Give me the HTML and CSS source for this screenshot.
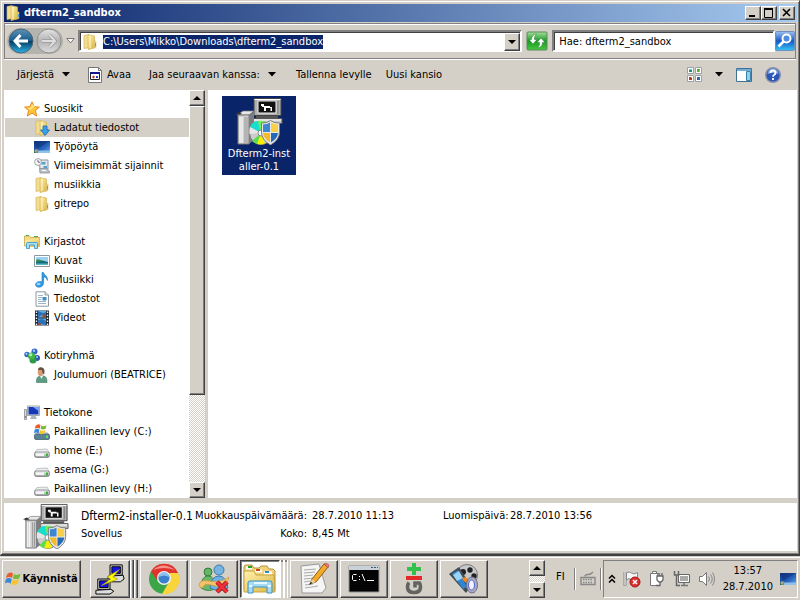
FILE: index.html
```html
<!DOCTYPE html>
<html lang="fi">
<head>
<meta charset="utf-8">
<title>dfterm2_sandbox</title>
<link rel="stylesheet" href="styles.css">
</head>
<body>
<svg class="defs" aria-hidden="true">
  <defs>
    <linearGradient id="gold" x1="0" y1="0" x2="1" y2="1"><stop offset="0" stop-color="#fff3b0"/><stop offset="1" stop-color="#dcb43e"/></linearGradient>
    <linearGradient id="blueBall" x1="0" y1="0" x2="0" y2="1"><stop offset="0" stop-color="#5d93b5"/><stop offset=".48" stop-color="#1a5c8e"/><stop offset=".5" stop-color="#05395f"/><stop offset="1" stop-color="#2bb4e8"/></linearGradient>
    <linearGradient id="greyBall" x1="0" y1="0" x2="0" y2="1"><stop offset="0" stop-color="#e2e2e2"/><stop offset=".5" stop-color="#b4b4b4"/><stop offset="1" stop-color="#dcdcdc"/></linearGradient>
    <linearGradient id="steel" x1="0" y1="0" x2="0" y2="1"><stop offset="0" stop-color="#f4f4f4"/><stop offset="1" stop-color="#9a9a9a"/></linearGradient>
    <linearGradient id="screenBlue" x1="0" y1="0" x2="1" y2="1"><stop offset="0" stop-color="#123a86"/><stop offset=".6" stop-color="#2763bd"/><stop offset="1" stop-color="#6aaae8"/></linearGradient>
    <symbol id="i-folder" viewBox="0 0 16 16">
      <path d="M2 1.500 7 .5v13l-5 1z" fill="#f2dd92" stroke="#d4b45a" stroke-width=".7"/>
      <path d="M6 1.500 8 1l4.500 1v12L6 15.500z" fill="url(#gold)" stroke="#d4b45a" stroke-width=".7"/>
      <path d="M8 1.500v12.500" stroke="#fff6cc"/><path d="M12.500 7h1.500v6.500l-1.500.5z" fill="#f2dc8a" stroke="#d4b45a" stroke-width=".5"/><path d="M13.500 9v3.500" stroke="#49a5e0"/>
    </symbol>
    <symbol id="i-download" viewBox="0 0 16 16">
      <use href="#i-folder"/>
      <path d="M9 6h4v4h2.500L11 15.500 6.500 10H9z" fill="#3d9ee6" stroke="#1b6db5" stroke-width=".8"/>
    </symbol>
    <symbol id="i-star" viewBox="0 0 16 16">
      <path d="m8 .8 2.100 4.900 5.300.4-4 3.500 1.300 5.400L8 12.100 3.300 15l1.300-5.400-4-3.500 5.300-.4z" fill="#ffc53a" stroke="#e58a1e" stroke-linejoin="round"/>
      <path d="M8 3 6.700 6.600 3 7l3 2 5-3.500z" fill="#fff0a0" opacity=".7"/>
    </symbol>
    <symbol id="i-desktop" viewBox="0 0 16 16">
      <path d="M0 2h16v11.500H0z" fill="url(#screenBlue)"/><path d="M0 2h16L3 10z" fill="#0a2a6e" opacity=".5"/>
      <path d="M0 11.500h16V14H0z" fill="#8fc1ea"/><path d="M0 11.500h4V14H0z" fill="#2b6d43"/><circle cx="2.500" cy="12" r="1.800" fill="#f2a23a"/><path d="M2.500 10.200a1.800 1.800 0 0 1 0 3.600z" fill="#4a9be8"/>
    </symbol>
    <symbol id="i-recent" viewBox="0 0 16 16">
      <path d="M5 2h9v9H6z" fill="#e3e8ec" stroke="#8c969e"/><path d="M7.500 4h4v2.500h-4zm2 4h3.500v2H9.500z" fill="#5b9ec9"/>
      <path d="M5.500 10.500H13l2.500 3v1.500H6z" fill="#b9c0c6" stroke="#87919a" stroke-width=".8"/><path d="M8 12.500h4" stroke="#fff"/>
      <circle cx="4" cy="4" r="3.400" fill="#fafafa" stroke="#9aa2a8"/><path d="M4 2v2.200h2" fill="none" stroke="#667"/>
    </symbol>
    <symbol id="i-library" viewBox="0 0 16 16">
      <path d="M.5 3V2h5l1 1.500h9V12H.5z" fill="#f5dc85" stroke="#c9a441" stroke-width=".8"/><path d="M2 1.500h3M10 2.500h4" stroke="#4ab04a"/><path d="M1 6h14.500v7H1z" fill="url(#gold)"/>
      <path d="M2.500 14.500v-5q0-1 1-1h9q1 0 1 1v5h-3V11h-5v3.500z" fill="#a9def7" stroke="#3b9bcf" stroke-width=".9"/>
    </symbol>
    <symbol id="i-picture" viewBox="0 0 16 16">
      <path d="M.5 2.500h15v11H.5z" fill="#fff" stroke="#8f979c"/><path d="M2 4h12v8H2z" fill="#9bd2f2"/><path d="M2 8q4-2 12 1v3H2z" fill="#196b77"/><path d="M2 7q3-2 6 1L2 9z" fill="#3a9050"/><path d="M2 10.500h12V12H2z" fill="#59b8cc"/>
    </symbol>
    <symbol id="i-music" viewBox="0 0 16 16">
      <path d="M8 .5h1.500c.5 2.500 4.500 3.500 4 8-1-3-2.500-3.200-4-3.500v6.500c0 2-2 3.700-4.500 3.700-2 0-3.500-1-3.500-2.500C1.500 10.800 4 9 8 9.800z" fill="#319be3" stroke="#1a75bf" stroke-width=".6"/><ellipse cx="4.500" cy="12" rx="2" ry="1.300" fill="#94d3fa"/>
    </symbol>
    <symbol id="i-doc" viewBox="0 0 16 16">
      <path d="M2 .8h9L14.500 4v11.200H2z" fill="#fff" stroke="#8f979c"/><path d="M11 .8V4h3.500" fill="#dfe5e9" stroke="#8f979c"/><path d="M4 4.500h5M4 6.500h4M4 8.500h3M4 10.500h8M4 12.500h8" stroke="#9eb4c8"/><path d="M8.500 6h4v3.500h-4z" fill="#3a8fc6"/>
    </symbol>
    <symbol id="i-video" viewBox="0 0 16 16">
      <path d="M1 .5h14v15H1z" fill="#20262c"/><path d="M4 1h8v6.500H4zm0 7.500h8V15H4z" fill="#5ab0ea"/><path d="m4 1 5 2 3-1v4L8 5 4 7.500zm0 9 4-1 4 2v4l-5-1-3 1z" fill="#2d6fb4"/><path d="m9 4 3 1.500v2H8zM4 13l3 1v1H4z" fill="#a14a34"/>
      <path d="M2.500 1.500v14M13.500 1.500v14" stroke="#e8eef2" stroke-width="1.400" stroke-dasharray="1.500 1.500"/>
    </symbol>
    <symbol id="i-group" viewBox="0 0 16 16">
      <circle cx="10.500" cy="3.500" r="3" fill="#2f64c8"/><circle cx="13" cy="10" r="3" fill="#2e57b8"/><circle cx="3" cy="6.500" r="2.700" fill="#2e6bd0"/><circle cx="9" cy="12" r="3.500" fill="#2c9b46"/><circle cx="7.500" cy="8" r="3.600" fill="#43b649"/>
      <circle cx="6.700" cy="6.800" r="1.600" fill="#b6f0a4"/><circle cx="10" cy="2.700" r="1.200" fill="#a8c8ff"/><circle cx="2.500" cy="5.700" r="1" fill="#b5d5ff"/><circle cx="13" cy="9" r="1" fill="#a8c8ff"/>
    </symbol>
    <symbol id="i-person" viewBox="0 0 16 16">
      <path d="M2.500 15.500c0-4 .5-6 4-6.500h3c3 .5 3.500 3 3.500 6.500z" fill="#5f9d83" stroke="#3d7660" stroke-width=".6"/><path d="m6 9 1.500 3L9 9z" fill="#eef3f0"/><ellipse cx="6.500" cy="5" rx="2.800" ry="4" fill="#d79b75"/><path d="M4 3C4 0 7 0 8.500.8c2.500 1 2.300 4.200 1.500 7L8.500 6 8 3z" fill="#6b5040"/>
    </symbol>
    <symbol id="i-computer" viewBox="0 0 16 16">
      <path d="M.5 4.500h2v10h-2z" fill="#d8dcdf" stroke="#858c92" stroke-width=".8"/><path d="M1 11h1v2H1z" fill="#3bb54a"/><path d="M3.500 1h12v9.500h-12z" fill="#e5e8ea" stroke="#8d959b" stroke-width=".8"/><path d="M4.500 2h10v7.500h-10z" fill="#1737b4"/><path d="M9 2h5.500v4z" fill="#7aa3ff"/><path d="M7.500 11h4l1.500 3H6z" fill="#aeb5ba"/>
    </symbol>
    <symbol id="i-drive" viewBox="0 0 16 16">
      <path d="m3 6.500 10-.5 2.500 4H.5z" fill="#eceeef" stroke="#a9adb0" stroke-width=".7"/><rect x=".5" y="9" width="15" height="5.500" rx="2" fill="url(#steel)" stroke="#7b8084" stroke-width=".8"/><path d="M2 10.500h8v2.500H2z" fill="#f4f5f5"/><path d="M12 10.500h2v3h-2z" fill="#33b53c"/>
    </symbol>
    <symbol id="i-flag" viewBox="0 0 16 16">
      <path d="M2 3.500Q5 0 8 2.500L7 7Q4 5 1 7.200z" fill="#ea5b2d"/><path d="M9 3Q12 5 15.500 2.800L14.300 7.200Q11 9 8 7.200z" fill="#7ab83a"/><path d="M.8 8.300Q4 6 6.800 8.200L5.600 12.800Q3 10.500 0 12.600z" fill="#3a86d8"/><path d="M7.700 8.500Q10.800 10.500 14 8.300L12.800 12.700Q9.500 15 6.500 13z" fill="#f8c42e"/>
    </symbol>
    <symbol id="i-sysdrive" viewBox="0 0 16 16">
      <path d="m3 8 10-.5 2.500 3H.5z" fill="#c6d2da"/><rect x=".5" y="10" width="15" height="5.500" rx="1.500" fill="#5b8195" stroke="#42616f" stroke-width=".8"/><path d="M12 11.500h2v2.500h-2z" fill="#5ce05e"/><svg x="0" y="-1" width="13" height="13"><use href="#i-flag"/></svg>
    </symbol>
    <symbol id="i-installer" viewBox="0 0 48 48">
      <path d="M19 1.500h27v17H19z" fill="#b0b0b0" stroke="#444"/><path d="M19.500 2.500h26" stroke="#fff"/><path d="M23 4h18v12H23z" fill="#111" stroke="#eee"/><path d="M26 7h3v2h6v1h2v4h-1.500v-3H31v3h-2v-4h-2V9h-1z" fill="#fff"/><path d="M43 4v13" stroke="#777"/>
      <path d="M21 19h22v2H21z" fill="#555"/><path d="M18 21.500h29v5H18z" fill="#c8c8c8" stroke="#555"/><path d="M19 23h27" stroke="#fff"/>
      <path d="m2 18 6-4h11l-5 4z" fill="#e8e8e8" stroke="#777" stroke-width=".7"/><path d="m0 17 4-2 3 2-3 1z" fill="#333"/><path d="M3 18h11v29H3z" fill="#d0d0d0" stroke="#777"/><path d="M5 20v26M7 20v26" stroke="#fff"/><path d="M10 20v26M12 20v26" stroke="#999"/><path d="m14 18 5-4v29l-5 4z" fill="#7d7d7d"/>
      <circle cx="26" cy="36" r="11.500" fill="#ccc" stroke="#777"/><path d="M26 36 15 30q3-6 8-6z" fill="#16dfd0"/><path d="m26 36-3-12q4-1 8 1z" fill="#6df05a"/><path d="m26 36-4 11q4 1 8-.5z" fill="#f6f000"/><path d="m26 36-9 8q2 2 5 3z" fill="#5edb4b"/><path d="m26 36-11-6q-1 3-.5 7z" fill="#e6e6e6"/><circle cx="26" cy="36" r="3" fill="#fff" stroke="#888"/>
      <path d="M35.500 23.500q4 3 9 2.500v9q0 8-9 13-9-5-9-13v-9q5 .5 9-2.500z" fill="#e9e9e9" stroke="#7a7a7a"/><path d="M35 25.500V35h-7v-7.500q4 0 7-2z" fill="#3d86d2"/><path d="M36 25.500V35h7v-7.500q-4 0-7-2z" fill="#f8cf45"/><path d="M35 36v9.500q-6.500-4-7-9.500z" fill="#f3bb2c"/><path d="M36 36v9.500q6.500-4 7-9.500z" fill="#2468b8"/>
    </symbol>
  </defs>
</svg>

<main class="window">
  <header class="titlebar">
    <svg class="icon"><use href="#i-folder"/></svg>
    <h1>dfterm2_sandbox</h1>
    <div class="captions">
      <button class="raised caption" aria-label="Pienennä"><svg width="12" height="10"><path d="M2 7h6v2H2z"/></svg></button>
      <button class="raised caption" aria-label="Suurenna"><svg width="12" height="10"><path d="M1.500 1v8.500h8V1M1 1h9" fill="none" stroke="#000"/><path d="M1 0h9v2H1z"/></svg></button>
      <button class="raised caption close" aria-label="Sulje"><svg width="12" height="10"><path d="m2 1 7 7M9 1 2 8" stroke="#000" stroke-width="1.600"/></svg></button>
    </div>
  </header>

  <nav class="navbar">
    <div class="travel">
      <button class="plain" aria-label="Takaisin"><svg width="26" height="26"><circle cx="13" cy="13" r="12" fill="url(#blueBall)" stroke="#4d6474"/><path d="M12.500 7 7 13l5.500 6M7.500 13H20" fill="none" stroke="#fff" stroke-width="3"/></svg></button>
      <button class="plain" aria-label="Eteenpäin"><svg width="26" height="26"><circle cx="13" cy="13" r="12" fill="url(#greyBall)" stroke="#8f8f8f"/><path d="m13.500 7 5.500 6-5.500 6M18.500 13H6" fill="none" stroke="#999" stroke-width="3.400"/><path d="m13.500 7 5.500 6-5.500 6M18.500 13H6" fill="none" stroke="#dedede" stroke-width="2"/></svg></button>
    </div>
    <button class="plain recent" aria-label="Viimeisimmät sivut"><svg width="9" height="6"><path d="M.8.5h7.400L4.500 5z" fill="#fff" stroke="#777"/></svg></button>
    <div class="sunken address">
      <svg class="icon"><use href="#i-folder"/></svg>
      <input class="path" aria-label="Osoite" value="C:\Users\Mikko\Downloads\dfterm2_sandbox">
      <button class="raised drop" aria-label="Aiemmat sijainnit"><svg width="8" height="4"><path d="M0 0h8L4 4z"/></svg></button>
    </div>
    <button class="plain refresh" aria-label="Päivitä"><svg width="22" height="20"><defs><linearGradient id="rg" x1="0" y1="0" x2="0" y2="1"><stop offset="0" stop-color="#a6dc9c"/><stop offset=".5" stop-color="#189a24"/><stop offset="1" stop-color="#49c741"/></linearGradient></defs><rect x="1" y="1" width="20" height="18" rx="1" fill="url(#rg)" stroke="#57895a"/><path d="m7 13-4-4.500h2.500q0-4.500 5-5.500L8.500 6v2.500H11zM15 7l4 4.500h-2.500q0 4.500-5 5.500l2-3v-2.500H11z" fill="#fff" stroke="#237e2b" stroke-width=".5"/></svg></button>
    <input class="sunken search" type="text" aria-label="Haku" value="Hae: dfterm2_sandbox">
    <button class="plain find" aria-label="Hae"><svg width="20" height="20"><defs><linearGradient id="sg" x1="0" y1="0" x2="0" y2="1"><stop offset="0" stop-color="#9ec1ee"/><stop offset=".5" stop-color="#1659c7"/><stop offset="1" stop-color="#35c5f2"/></linearGradient></defs><rect x=".5" y=".5" width="19" height="19" rx="1" fill="url(#sg)" stroke="#6e8fc0"/><circle cx="11.500" cy="7.500" r="4" fill="#4f8be0" stroke="#fff" stroke-width="2"/><path d="m8.500 10.500-5 5" stroke="#fff" stroke-width="2.600"/></svg></button>
  </nav>

  <div class="toolbar" role="toolbar">
    <button class="plain organize">Järjestä <svg width="8" height="5"><path d="M0 0h8L4 4.500z"/></svg></button>
    <button class="plain open"><svg width="14" height="16"><path d="M.5.500h10l3 3v12H.5z" fill="#fff" stroke="#777"/><path d="M10.500.5v3h3" fill="none" stroke="#777"/><path d="M2.500 5.500h9v7h-9z" fill="#fff" stroke="#222"/><path d="M2 5h10v2H2z" fill="#16168c"/><path d="m4 10 1.500-1.500L7 10l-1.500 1.500z" fill="#c22"/><path d="M8 9h2v2H8z" fill="#24c"/></svg>Avaa</button>
    <button class="plain share">Jaa seuraavan kanssa: <svg width="8" height="5"><path d="M0 0h8L4 4.500z"/></svg></button>
    <button class="plain burn">Tallenna levylle</button>
    <button class="plain">Uusi kansio</button>
    <div class="tools">
      <button class="plain" aria-label="Vaihda näkymää"><svg width="15" height="15"><g fill="#fff" stroke="#9aa3a8"><path d="M.5.5h6v6h-6zM8.500.5h6v6h-6zM.5 8.500h6v6h-6zM8.500 8.500h6v6h-6z"/></g><path d="M2 3h3v2H2z" fill="#29916a"/><path d="M10 2h3v3h-3z" fill="#61a832"/><path d="M2 10h3v3H2z" fill="#b63a20"/><path d="M10 10h3v3h-3z" fill="#31619c"/><path d="M2 2h3v1H2z" fill="#72c3ec"/><path d="M12 3h1v2h-1zM4 10h1v1H4z" fill="#eea72e"/><path d="M12 10h1v2h-1z" fill="#b5452c"/></svg></button>
      <button class="plain" aria-label="Lisää näkymiä"><svg width="8" height="5"><path d="M0 0h8L4 4.500z"/></svg></button>
      <button class="plain" aria-label="Esikatseluruutu"><svg width="16" height="14"><path d="M.5.5h15v13H.5z" fill="#fff" stroke="#3e7195"/><path d="M1 1h14v2H1z" fill="#74aed0"/><path d="M10.500 3.500h4v9h-4z" fill="#8fd0ea" stroke="#3d82ab"/></svg></button>
      <button class="plain" aria-label="Ohje"><svg width="16" height="16"><circle cx="8" cy="8" r="7.300" fill="#2c57b8" stroke="#8a92a5" stroke-width="1.400"/><path d="M2.500 7a5.500 5.500 0 0 1 11 0q-5-2-11 0z" fill="#7da5e6"/><path d="M5.500 6q0-2.500 2.500-2.500T10.500 6q0 1-1.200 1.800Q8 8.500 8 9.800M8 11v2" fill="none" stroke="#fff" stroke-width="1.800"/></svg></button>
    </div>
  </div>

  <div class="body">
    <aside class="sidebar">
      <div class="tree">
        <ul>
          <li><a href="#"><svg class="icon"><use href="#i-star"/></svg>Suosikit</a>
            <ul>
              <li class="selected"><a href="#"><svg class="icon"><use href="#i-download"/></svg>Ladatut tiedostot</a></li>
              <li><a href="#"><svg class="icon"><use href="#i-desktop"/></svg>Työpöytä</a></li>
              <li><a href="#"><svg class="icon"><use href="#i-recent"/></svg>Viimeisimmät sijainnit</a></li>
              <li><a href="#"><svg class="icon"><use href="#i-folder"/></svg>musiikkia</a></li>
              <li><a href="#"><svg class="icon"><use href="#i-folder"/></svg>gitrepo</a></li>
            </ul></li>
          <li><a href="#"><svg class="icon"><use href="#i-library"/></svg>Kirjastot</a>
            <ul>
              <li><a href="#"><svg class="icon"><use href="#i-picture"/></svg>Kuvat</a></li>
              <li><a href="#"><svg class="icon"><use href="#i-music"/></svg>Musiikki</a></li>
              <li><a href="#"><svg class="icon"><use href="#i-doc"/></svg>Tiedostot</a></li>
              <li><a href="#"><svg class="icon"><use href="#i-video"/></svg>Videot</a></li>
            </ul></li>
          <li><a href="#"><svg class="icon"><use href="#i-group"/></svg>Kotiryhmä</a>
            <ul>
              <li><a href="#"><svg class="icon"><use href="#i-person"/></svg>Joulumuori (BEATRICE)</a></li>
            </ul></li>
          <li><a href="#"><svg class="icon"><use href="#i-computer"/></svg>Tietokone</a>
            <ul>
              <li><a href="#"><svg class="icon"><use href="#i-sysdrive"/></svg>Paikallinen levy (C:)</a></li>
              <li><a href="#"><svg class="icon"><use href="#i-drive"/></svg>home (E:)</a></li>
              <li><a href="#"><svg class="icon"><use href="#i-drive"/></svg>asema (G:)</a></li>
              <li><a href="#"><svg class="icon"><use href="#i-drive"/></svg>Paikallinen levy (H:)</a></li>
            </ul></li>
        </ul>
      </div>
      <div class="scrollbar dither">
        <button class="raised arrow" aria-label="Vieritä ylös"><svg width="8" height="4"><path d="M0 4h8L4 0z"/></svg></button>
        <div class="raised thumb"></div>
        <div class="track"></div>
        <button class="raised arrow" aria-label="Vieritä alas"><svg width="8" height="4"><path d="M0 0h8L4 4z"/></svg></button>
      </div>
    </aside>
    <section class="files">
      <button class="file"><svg width="48" height="48"><use href="#i-installer"/></svg><span>Dfterm2-inst<br>aller-0.1</span></button>
    </section>
  </div>

  <footer class="details">
    <svg class="preview"><use href="#i-installer"/></svg>
    <div class="facts">
      <strong>Dfterm2-installer-0.1</strong><span class="label">Muokkauspäivämäärä:</span><span>28.7.2010 11:13</span><span>Luomispäivä:</span><span>28.7.2010 13:56</span>
      <span>Sovellus</span><span class="label">Koko:</span><span>8,45 Mt</span>
    </div>
  </footer>
</main>

<footer class="taskbar">
  <button class="raised start"><svg class="icon"><use href="#i-flag"/></svg>Käynnistä</button>
  <div class="tasks">
    <div class="stack">
      <button class="raised task" aria-label="PuTTY"><svg width="32" height="32" viewBox="0 0 34 34"><g stroke="#000"><path d="M17 2h13v11H17z" fill="#ccc"/><path d="M19 4h9v7h-9z" fill="#1414e8"/><path d="m15 14 16-1 1 4-4 3H15z" fill="#ddd"/><path d="M4 17h13v11H4z" fill="#ccc"/><path d="M6 19h9v7H6z" fill="#1414e8"/><path d="m2 29 16-1 3 2-4 3H2z" fill="#ddd"/></g><path d="m27 7-13 8 4 2-10 7 17-7-5-2z" fill="#ff0" stroke="#b49b00" stroke-width=".7"/></svg></button>
      <i></i><i></i>
    </div>
    <button class="raised task" aria-label="Chrome"><svg width="32" height="32" viewBox="0 0 32 32"><circle cx="16" cy="16" r="15" fill="#3aa648"/><path d="M3 8.500A15 15 0 0 1 30 10H16L9 17z" fill="#e1332d"/><path d="M30 10A15 15 0 0 1 14 31l7-12 1-9z" fill="#f9d43a"/><path d="M5 7Q15-2 27 7 16 3 5 7z" fill="#f79386"/><circle cx="16" cy="15" r="7" fill="#f4f4f0"/><circle cx="16" cy="15" r="5.600" fill="#3a80cc"/><path d="M11 14a5 5 0 0 1 10 0q-5-3-10 0z" fill="#8dc0f0"/></svg></button>
    <button class="raised task" aria-label="Messenger"><svg width="32" height="32" viewBox="0 0 32 32"><circle cx="10" cy="9" r="4" fill="#63b565" stroke="#357b3a"/><path d="M3 25q0-12 7-12t8 12q-7 5-15 0z" fill="#69b96a" stroke="#3d8742"/><circle cx="21" cy="7" r="5" fill="#77b4e2" stroke="#397bae"/><path d="M12 25q1-12 9-12 7 0 9 12-8 5-18 0z" fill="#6fb0e0" stroke="#397bae"/><path d="M1 22q1-6 10-4 12 2 20-4-2 12-14 9-12-4-12 2-4 0-4-3z" fill="#f3c26a" stroke="#cf9536" stroke-width=".7"/><path d="m19 19 10 10m0-10L19 29" stroke="#a00f16" stroke-width="4.500"/><path d="m19 19 10 10m0-10L19 29" stroke="#ee3038" stroke-width="3"/></svg></button>
    <div class="stack">
      <button class="task active" aria-label="Resurssienhallinta"><svg width="34" height="32" viewBox="0 0 34 32"><path d="M1 8V4q0-2 2-2h6l2 3h5l2-2h6l2 3h4l2 2v19H1z" fill="#efd27a" stroke="#b8923d"/><path d="M3 5h6M12 8h7M21 10h8" stroke="#fff" stroke-width="3"/><path d="M5 3h4v2H5z" fill="#1ca12b"/><path d="M13 6h4v2h-4z" fill="#d2431d"/><path d="M22 8h4v2h-4z" fill="#288bd4"/><path d="M1 8h10l2 4h18l1 17H1z" fill="url(#gold)" stroke="#c9a441"/><path d="M5 30V20q0-2 2-2h20q2 0 2 2v10h-5v-6H10v6z" fill="#a7dbf5" stroke="#3892c5"/><path d="M6 23h3M25 23h3M11 20h13" stroke="#e7f9ff" stroke-width="2"/></svg></button>
      <i></i><i></i>
    </div>
    <button class="raised task" aria-label="Muistio"><svg width="32" height="32" viewBox="0 0 32 32"><path d="m3 3 18-2 7 24-4 5H4z" fill="#f5f5f5" stroke="#999"/><path d="m6 7 12-1M6 10l11-1M6 13l9-1M6 16l10-1M6 19l6-1M7 22l8-1M7 25l13-2" stroke="#aaa"/><path d="m12 21 2-5L26 1l4 3-12 15z" fill="#f5aa27" stroke="#8b5b16"/><path d="m26 1 2-1 3 2-1 3z" fill="#e87678" stroke="#a34848" stroke-width=".6"/><path d="m12 21 2-5 4 3z" fill="#e6cfa0"/><path d="m11 22 2-3 1 1z"/></svg></button>
    <button class="raised task" aria-label="Komentokehote"><svg width="32" height="28" viewBox="0 0 32 28"><path d="M1 1h30v26H1z" fill="#050505" stroke="#8b8f94"/><path d="M1 1h30v4H1z" fill="#c9d1d9"/><path d="M23 2h2v1h-2zm3 0h2v1h-2zm3 0h1v1h-1z" fill="#456"/><path d="M8.500 9.500h-3l-1 1v4l1 1h3M11.500 11v1m0 2v1M14 9l3 7M19 15.500h7" fill="none" stroke="#fff"/></svg></button>
    <button class="raised task" aria-label="Git"><svg width="18" height="32" viewBox="0 0 18 32"><path d="M7 0h4v4h5v4h-5v4H7V8H2V4h5z" fill="#31c14c"/><path d="M1 13h16v4H1z" fill="#e22a2a"/><path d="M4 19.500Q2.500 21 2.500 24.500 3 29.500 9 29.500t6.500-5q0-3-1-4.500H10v4.500" fill="none" stroke="#63635f" stroke-width="3.600"/></svg></button>
    <button class="raised task" aria-label="Movie Maker"><svg width="32" height="32" viewBox="0 0 32 32"><circle cx="19" cy="12" r="10.500" fill="#c7c9cb" stroke="#77797c"/><g fill="#222"><circle cx="15" cy="9" r="3"/><circle cx="22" cy="7" r="2.700"/><circle cx="26" cy="13" r="2.700"/></g><path d="m1 11 10-7 12 19-5 7z" fill="#434b52"/><path d="m4 11 6-4 9 17-4 2z" fill="#2f86d4"/><path d="m5 12 6-4 4 7-6 3z" fill="#9cd3f5"/><path d="m16 14 5 2-3 4-4-4z" fill="#ef8a22"/><ellipse cx="24" cy="22" rx="5.500" ry="8" fill="#a8abc4" stroke="#6d7089"/><ellipse cx="23.500" cy="22" rx="3" ry="5" fill="#eef2ff" stroke="#5561cc"/></svg></button>
  </div>
  <div class="scroller dither">
    <button class="raised arrow" aria-label="Edelliset"><svg width="8" height="4"><path d="M0 4h8L4 0z"/></svg></button>
    <button class="raised arrow" aria-label="Seuraavat"><svg width="8" height="4"><path d="M0 0h8L4 4z"/></svg></button>
  </div>
  <span class="language">FI</span>
  <div class="keyboard"><svg width="16" height="16"><path d="M1 6.500h14v7H1z" fill="none" stroke="#888" stroke-width="1.400"/><path d="M3 8.500h10M3 11.500h10" stroke="#888" stroke-width="1.400" stroke-dasharray="1.500 1"/><path d="M5 5.500q0-2 3-2t5-2.500" fill="none" stroke="#888" stroke-width="1.400"/></svg></div>
  <div class="tray">
    <svg width="8" height="10"><path d="m1 4.500 3-3 3 3m-6 4 3-3 3 3" fill="none" stroke="#000" stroke-width="1.500"/></svg>
    <svg width="18" height="18"><path d="M2 2v14" stroke="#888" stroke-width="3"/><path d="M2 2v13.500" stroke="#fff"/><path d="M3.500 3q3-2 5 0t6-.5v7q-3 2-6 0t-5 .5z" fill="#f5f5f5" stroke="#888"/><circle cx="12" cy="12" r="5" fill="#db2e2e" stroke="#a51919"/><path d="m10 10 4 4m0-4-4 4" stroke="#fff" stroke-width="1.600"/></svg>
    <svg width="18" height="18"><path d="M2.500 3.500h9v12h-9zM4.500 1.500h4v2h-4z" fill="#fff" stroke="#777"/><path d="M9 6h6v4l-2 2h-2L9 10zM10 3v3m4-3v3M12 12v3.500H8" fill="#fff" stroke="#666" stroke-width="1.300"/></svg>
    <svg width="18" height="18"><path d="M5.500 4.500h11v8h-11z" fill="#aaa" stroke="#666"/><path d="M6.500 5.500h9v6h-9z" fill="none" stroke="#fff"/><path d="M8 15.500h7M11 13v2" stroke="#777" stroke-width="1.500"/><path d="M1.500 1v4h4V1M3.500 5v10.500H7" fill="none" stroke="#666" stroke-width="1.500"/></svg>
    <svg width="18" height="18"><path d="M1.500 6.500h3l4-4v13l-4-4h-3z" fill="#fff" stroke="#777"/><path d="M10.500 6.500q2 2.500 0 5M12.500 4.500q3.500 4.500 0 9M14.500 2.500q4 6.500 0 13" fill="none" stroke="#888"/></svg>
    <time class="clock"><span>13:57</span><span>28.7.2010</span></time>
    <svg class="icon"><use href="#i-desktop"/></svg>
  </div>
</footer>
</body>
</html>
```
FILE: styles.css
```css
* { box-sizing: border-box; }

body {
  margin: 0;
  min-height: 100vh;
  display: flex;
  flex-direction: column;
  background: #d4d0c8;
  color: #000;
  font: 11px/14px "DejaVu Sans Condensed", "Noto Sans", sans-serif;
}

button, input { font: inherit; color: inherit; }
button { padding: 0; display: flex; align-items: center; justify-content: center; white-space: nowrap; }
svg { display: block; flex: none; }
ul { list-style: none; margin: 0; padding: 0; }
.defs { position: absolute; width: 0; height: 0; }
.icon { width: 16px; height: 16px; }
.plain { background: none; border: 0; }

.raised {
  background: #d4d0c8;
  border: 1px solid;
  border-color: #fff #404040 #404040 #fff;
  box-shadow: inset -1px -1px #808080;
}
.sunken {
  background: #fff;
  border: 2px solid;
  border-color: #808080 #fff #fff #808080;
  box-shadow: inset 1px 1px #404040;
}
.dither { background: repeating-conic-gradient(#fff 0 25%, #d4d0c8 0 50%) 0 0 / 2px 2px; }

/* Window frame */
.window {
  flex: 1;
  min-height: 0;
  display: flex;
  flex-direction: column;
  padding: 2px 2px 3px;
  border: 1px solid #d4d0c8;
  border-right-color: #404040;
  border-bottom: 2px solid #404040;
  box-shadow: inset 1px 1px #fff, inset -1px -1px #808080;
}
.titlebar {
  display: flex;
  align-items: center;
  gap: 3px;
  height: 18px;
  margin: 1px 0 1px 1px;
  padding: 0 2px 0 1px;
  background: linear-gradient(90deg, #0a246a, #a6caf0);
  color: #fff;
}
.titlebar h1 { flex: 1; margin: 0; font-size: 11px; font-weight: bold; }
.captions { display: flex; }
.caption { width: 16px; height: 14px; }
.close { margin-left: 2px; }

/* Address and search */
.navbar {
  display: flex;
  align-items: center;
  height: 36px;
  margin: 0 1px;
  padding-left: 2px;
  border: 1px solid #808080;
  box-shadow: 0 1px #fff, inset 0 1px #fff;
}
.travel { display: flex; gap: 2px; padding: 0 1px; border-radius: 13px; background: #b5b3ae; }
.recent { width: 15px; height: 20px; }
.address { flex: 21 1 0; display: flex; align-items: center; height: 22px; padding: 1px 0 0 2px; }
.path {
  field-sizing: content;
  height: 14px;
  margin: 0 auto 0 5px;
  padding: 0;
  border: 0;
  background: #0a246a;
  color: #fff;
}
.drop { width: 16px; height: 18px; }
.refresh { margin: 0 4px; }
.search { flex: 10 1 0; min-width: 0; height: 22px; padding: 0 5px; }

/* Command bar */
.toolbar { display: flex; align-items: center; height: 31px; padding: 0 16px 0 14px; }
.organize { gap: 8px; margin-right: 18px; }
.open { gap: 5px; margin-right: 18px; }
.share { gap: 8px; margin-right: 20px; }
.burn { margin-right: 14px; }
.tools { display: flex; align-items: center; gap: 13px; margin-left: auto; }

/* Folder tree and file area */
.body { flex: 1; min-height: 0; display: flex; margin-left: 1px; }
.sidebar { display: flex; width: 201px; }
.tree { flex: 1; padding: 9px 0 0 1px; background: #fff; overflow: hidden; }
.tree a { display: flex; align-items: center; gap: 4px; height: 19px; padding: 1px 0 0 19px; color: inherit; text-decoration: none; white-space: nowrap; }
.tree ul ul { margin-bottom: 19px; }
.tree li:last-child ul { margin-bottom: 0; }
.tree li li a { padding-left: 29px; }
.selected { background: #d4d0c8; }
.scrollbar { display: flex; flex-direction: column; width: 16px; }
.arrow { height: 16px; width: 16px; }
.thumb { flex: 289; }
.track { flex: 87; }
.files { flex: 1; margin-left: 3px; padding: 6px 14px; background: #fff; }
.file { flex-direction: column; justify-content: flex-start; gap: 2px; width: 74px; padding: 1px 0 2px; border: 0; background: #0a246a; color: #fff; line-height: 13px; }

/* Details pane */
.details { display: flex; gap: 12px; min-height: 48px; margin: 5px 0 0 1px; padding-left: 19px; background: #fff; overflow: hidden; }
.preview { width: 46px; height: 46px; }
.facts {
  display: grid;
  grid-template-columns: 112px 109px 126px 62px auto;
  grid-auto-rows: 18px;
  column-gap: 5px;
  align-items: center;
  padding-top: 4px;
  white-space: nowrap;
}
.facts strong { font-size: 12px; font-weight: normal; }
.label { justify-self: end; }

/* Taskbar */
.taskbar {
  display: flex;
  align-items: center;
  height: 44px;
  padding: 3px 2px 2px;
  border-top: 1px solid #d4d0c8;
  box-shadow: inset 0 1px #fff;
}
.start { gap: 1px; width: 79px; height: 38px; font-weight: bold; }
.tasks { display: flex; gap: 2px; margin-left: 9px; }
.task { width: 48px; height: 38px; }
.stack { display: flex; width: 48px; }
.stack .task { width: 40px; }
.stack i { width: 4px; border-right: 1px solid #404040; border-left: 1px solid #fff; box-shadow: inset -1px 0 #808080; }
.active { background: #fff; border: 1px solid; border-color: #404040 #fff #fff #404040; box-shadow: inset 1px 1px #808080; }
.active ~ i { border-right-color: #fff; box-shadow: inset 0 2px #808080; }
.scroller { display: flex; flex-direction: column; justify-content: space-between; height: 38px; margin-left: auto; }
.language { margin: 0 9px 4px 11px; }
.keyboard { padding: 3px 4px 3px 5px; border: solid #808080; border-width: 0 1px; box-shadow: 1px 0 #fff, inset 1px 0 #fff; }
.tray {
  display: flex;
  align-items: center;
  gap: 7px;
  height: 38px;
  margin-left: 2px;
  padding: 0 1px 0 4px;
  border: 1px solid;
  border-color: #808080 #fff #fff #808080;
}
.clock { display: flex; flex-direction: column; align-items: center; gap: 2px; }
```
